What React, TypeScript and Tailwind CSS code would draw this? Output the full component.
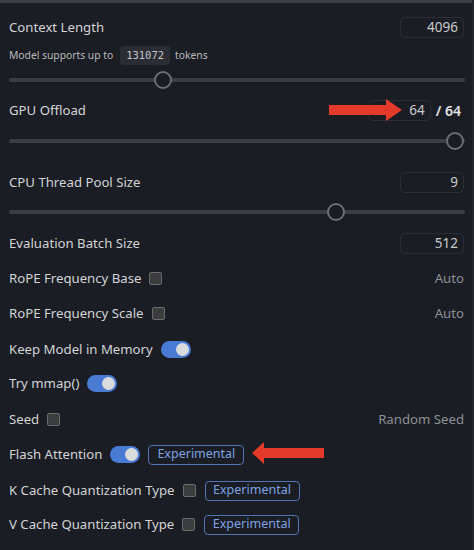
import React from "react";

const font = { fontFamily: '"Noto Sans", "Open Sans", sans-serif' };

function NumBox({ value, className }: { value: string; className: string }) {
  return (
    <div
      className={`flex h-[21px] items-center justify-end rounded-[5px] border border-[#2b2e34] bg-[#1a1d23] pr-[5px] text-[13.5px] text-[#c9cacc] ${className}`}
    >
      {value}
    </div>
  );
}

function Slider({ pos }: { pos: number }) {
  return (
    <div className="relative mx-[9px] h-[18px]">
      <div className="absolute left-0 right-0 top-[7px] h-[4px] rounded-full bg-[#3a3d43]" />
      <div
        className="absolute top-0 h-[18px] w-[18px] -translate-x-1/2 rounded-full border-2 border-[#6a6d72] bg-[#191c22]"
        style={{ left: `${pos}px` }}
      />
    </div>
  );
}

function Check() {
  return <div className="h-[13px] w-[13px] rounded-[2px] border border-[#6b6b6d] bg-[#3b3c3e]" />;
}

function Toggle() {
  return (
    <div className="flex h-[17px] w-[30px] items-center justify-end rounded-full bg-[#4a7bd4] pr-[2px]">
      <div className="h-[13px] w-[13px] rounded-full bg-[#dadbdd]" />
    </div>
  );
}

function Badge({ className }: { className: string }) {
  return (
    <div
      className={`flex h-[20px] items-center justify-center rounded-[4px] border border-[#5274b3] text-[12.5px] text-[#7ea2e2] ${className}`}
    >
      Experimental
    </div>
  );
}

function ArrowRight() {
  return (
    <svg width="74" height="22" viewBox="0 0 74 22" className="absolute left-[329px] top-[99px]">
      <polygon points="0,6 57,6 57,0 73,11 57,22 57,16 0,16" fill="#e33a2c" />
    </svg>
  );
}

function ArrowLeft() {
  return (
    <svg width="73" height="22" viewBox="0 0 73 22" className="absolute left-[252px] top-[442px]">
      <polygon points="0,11 12,0 12,6 72,6 72,16 12,16 12,22" fill="#e33a2c" />
    </svg>
  );
}

export default function App() {
  return (
    <div
      className="relative h-[550px] w-[474px] overflow-hidden bg-[#1a1d23] text-[13.2px] text-[#d3d4d6]"
      style={font}
    >
      <div className="h-[3px] bg-[#3a3d42]" />
      <div className="absolute right-0 top-0 h-full w-[2px] bg-[#23262c]" />

      {/* Context Length */}
      <div className="mt-[14px] flex h-[21px] items-center justify-between pl-[9px] pr-[10px]">
        <span>Context Length</span>
        <NumBox value="4096" className="w-[64px]" />
      </div>
      <div className="mt-[8px] flex h-[19px] items-center pl-[9px] text-[10.3px] text-[#b9babc]">
        <span>Model supports up to</span>
        <span
          className="ml-[7px] flex h-[19px] items-center rounded-[3px] bg-[#2a2d33] px-[6px] text-[10.5px] text-[#c4c5c7]"
          style={{ fontFamily: '"DejaVu Sans Mono", monospace' }}
        >
          131072
        </span>
        <span className="ml-[5px]">tokens</span>
      </div>
      <div className="mt-[6px]">
        <Slider pos={154} />
      </div>

      {/* GPU Offload */}
      <div className="mt-[11px] flex h-[21px] items-center justify-between pl-[9px] pr-[13px]">
        <span>GPU Offload</span>
        <div className="flex items-center">
          <NumBox value="64" className="w-[63px]" />
          <span className="ml-[5px] text-[14px] font-semibold text-[#e3e4e6]">/ 64</span>
        </div>
      </div>
      <div className="mt-[11px]">
        <Slider pos={446} />
      </div>

      {/* CPU Thread Pool Size */}
      <div className="mt-[22px] flex h-[21px] items-center justify-between pl-[9px] pr-[10px]">
        <span>CPU Thread Pool Size</span>
        <NumBox value="9" className="w-[64px]" />
      </div>
      <div className="mt-[10px]">
        <Slider pos={327} />
      </div>

      {/* Evaluation Batch Size */}
      <div className="mt-[12px] flex h-[21px] items-center justify-between pl-[9px] pr-[10px]">
        <span>Evaluation Batch Size</span>
        <NumBox value="512" className="w-[64px]" />
      </div>

      {/* RoPE base */}
      <div className="mt-[14px] flex h-[21px] items-center justify-between pl-[9px] pr-[10px]">
        <div className="flex items-center gap-[8px]">
          <span>RoPE Frequency Base</span>
          <Check />
        </div>
        <span className="text-[#8d9095]">Auto</span>
      </div>

      {/* RoPE scale */}
      <div className="mt-[14px] flex h-[21px] items-center justify-between pl-[9px] pr-[10px]">
        <div className="flex items-center gap-[8px]">
          <span>RoPE Frequency Scale</span>
          <Check />
        </div>
        <span className="text-[#8d9095]">Auto</span>
      </div>

      {/* Keep model */}
      <div className="mt-[15px] flex h-[21px] items-center gap-[8px] pl-[9px]">
        <span>Keep Model in Memory</span>
        <Toggle />
      </div>

      {/* mmap */}
      <div className="mt-[13px] flex h-[21px] items-center gap-[8px] pl-[9px]">
        <span>Try mmap()</span>
        <Toggle />
      </div>

      {/* Seed */}
      <div className="mt-[15px] flex h-[21px] items-center justify-between pl-[9px] pr-[10px]">
        <div className="flex items-center gap-[8px]">
          <span>Seed</span>
          <Check />
        </div>
        <span className="text-[#8d9095]">Random Seed</span>
      </div>

      {/* Flash Attention */}
      <div className="mt-[14px] flex h-[21px] items-center pl-[9px]">
        <span>Flash Attention</span>
        <div className="ml-[8px]">
          <Toggle />
        </div>
        <Badge className="ml-[8px] w-[96px]" />
      </div>

      {/* K cache */}
      <div className="mt-[15px] flex h-[21px] items-center pl-[9px]">
        <span>K Cache Quantization Type</span>
        <div className="ml-[8px]">
          <Check />
        </div>
        <Badge className="ml-[9px] w-[95px]" />
      </div>

      {/* V cache */}
      <div className="mt-[13px] flex h-[21px] items-center pl-[9px]">
        <span>V Cache Quantization Type</span>
        <div className="ml-[8px]">
          <Check />
        </div>
        <Badge className="ml-[9px] w-[95px]" />
      </div>

      <ArrowRight />
      <ArrowLeft />
    </div>
  );
}
